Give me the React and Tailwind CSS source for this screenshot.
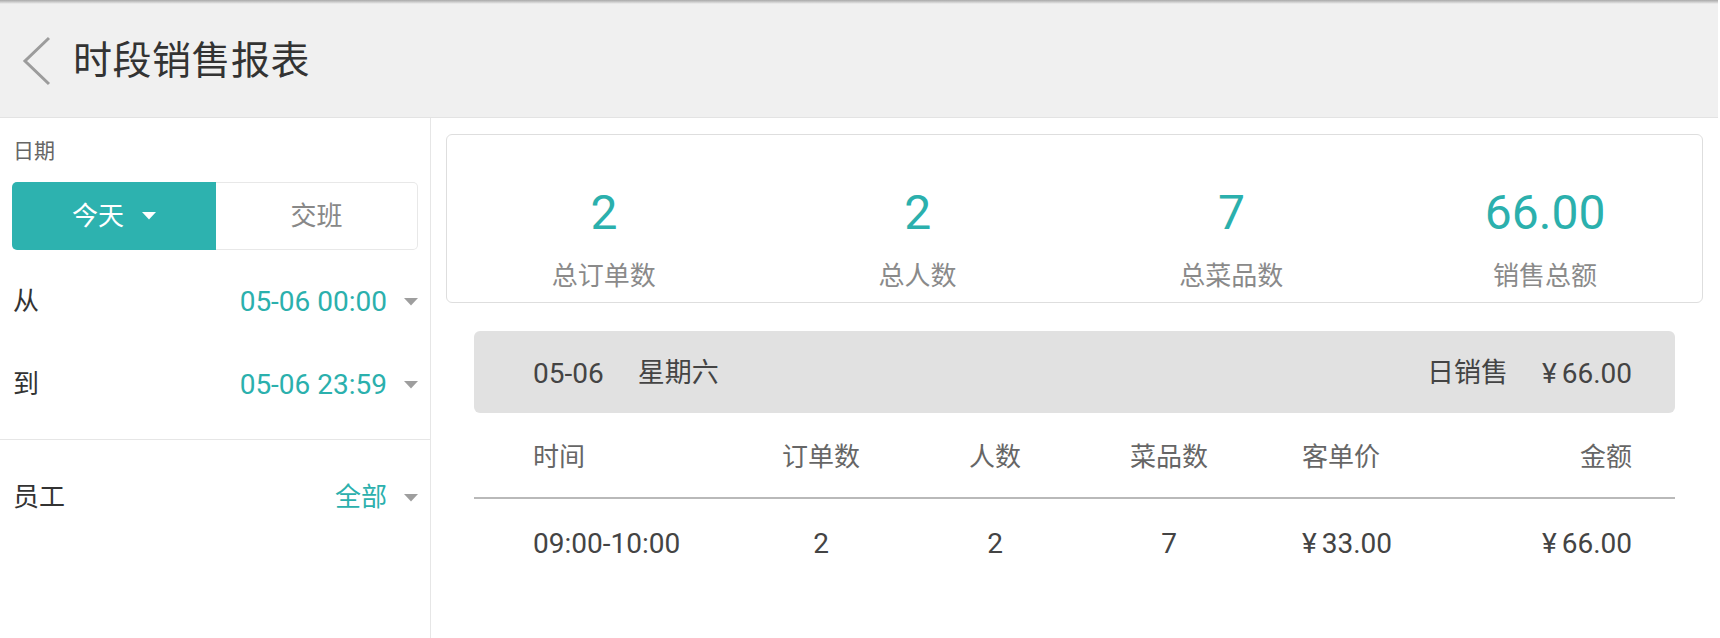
import React from 'react'

const teal = 'text-[#2bb0ad]'

function Caret({ className = 'fill-[#9e9e9e]' }) {
  return (
    <svg width="14" height="8" viewBox="0 0 14 8" className={className}>
      <path d="M0 0h14L7 7.5z" />
    </svg>
  )
}

function FilterRow({ label, value, size = 'text-[28px]' }) {
  return (
    <div className="h-[83px] flex items-center justify-between">
      <span className="pl-[1px] text-[26px] text-[#333]">{label}</span>
      <div className="flex items-center">
        <span className={`${size} ${teal}`}>{value}</span>
        <Caret className="ml-[17px] fill-[#9e9e9e]" />
      </div>
    </div>
  )
}

function Stat({ value, label }) {
  return (
    <div className="flex flex-col items-center pt-[50px]">
      <div className={`text-[48px] leading-[56px] ${teal}`}>{value}</div>
      <div className="mt-[18px] text-[26px] leading-[34px] text-[#8a8a8a]">{label}</div>
    </div>
  )
}

function Yen({ amount }) {
  return (
    <span>
      <span className="mr-[5px]">¥</span>
      {amount}
    </span>
  )
}

const cols = 'grid grid-cols-[200px_176px_172px_176px_229px_1fr] items-center'

export default function App() {
  return (
    <div className="w-[1718px] h-[638px] bg-white font-['Roboto','Noto_Sans_CJK_SC',sans-serif] overflow-hidden">
      <header className="h-[118px] bg-[#f0f0f0] border-b border-[#e3e3e3] flex flex-col">
        <div className="h-[4px] bg-linear-to-b from-[#a9a9a9] to-[#f0f0f0]" />
        <div className="flex-1 flex items-center pl-[22px]">
          <svg width="30" height="50" viewBox="0 0 30 50" fill="none" stroke="#9c9c9c" strokeWidth="3">
            <path d="M27 2 L3 25 L27 48" />
          </svg>
          <h1 className="ml-[21px] pt-[2px] text-[39px] text-[#333] tracking-[0.5px]">时段销售报表</h1>
        </div>
      </header>

      <div className="flex h-[520px]">
        <aside className="w-[431px] border-r border-[#e6e6e6]">
          <div className="px-[12px] pt-[19px]">
            <div className="pl-[1px] text-[21px] leading-[28px] text-[#666]">日期</div>
            <div className="mt-[17px] h-[68px] flex">
              <div className="w-[204px] rounded-l-[5px] bg-[#2db2af] flex items-center justify-center text-white text-[26px]">
                今天
                <Caret className="ml-[18px] fill-white" />
              </div>
              <div className="flex-1 rounded-r-[5px] border border-l-0 border-[#e8e8e8] flex items-center justify-center text-[#888] text-[26px]">
                交班
              </div>
            </div>
            <div className="mt-[10px]">
              <FilterRow label="从" value="05-06 00:00" />
              <FilterRow label="到" value="05-06 23:59" />
            </div>
          </div>
          <div className="mt-[13px] h-px bg-[#e6e6e6]" />
          <div className="px-[12px] mt-[16px]">
            <FilterRow label="员工" value="全部" size="text-[26px]" />
          </div>
        </aside>

        <main className="flex-1 px-[15px] pt-[16px]">
          <div className="h-[169px] border border-[#dedede] rounded-[6px] grid grid-cols-4">
            <Stat value="2" label="总订单数" />
            <Stat value="2" label="总人数" />
            <Stat value="7" label="总菜品数" />
            <Stat value="66.00" label="销售总额" />
          </div>

          <div className="mx-[28px] mt-[28px]">
            <div className="h-[82px] rounded-[6px] bg-[#e1e1e1] flex items-center justify-between pl-[59px] pr-[43px] pt-[3px] text-[28px] text-[#444]">
              <div className="flex items-center">
                <span>05-06</span>
                <span className="ml-[34px] text-[27px]">星期六</span>
              </div>
              <div className="flex items-center">
                <span className="text-[27px]">日销售</span>
                <span className="ml-[34px]"><Yen amount="66.00" /></span>
              </div>
            </div>

            <div className={`${cols} h-[84px] pl-[59px] pr-[43px] pt-[4px] text-[26px] text-[#666]`}>
              <span>时间</span>
              <span className="text-center">订单数</span>
              <span className="text-center">人数</span>
              <span className="text-center">菜品数</span>
              <span className="pl-[45px]">客单价</span>
              <span className="text-right">金额</span>
            </div>
            <div className="h-[2px] bg-[#b9b9b9]" />
            <div className={`${cols} h-[86px] pl-[59px] pr-[43px] pt-[4px] text-[28px] text-[#444]`}>
              <span>09:00-10:00</span>
              <span className="text-center">2</span>
              <span className="text-center">2</span>
              <span className="text-center">7</span>
              <span className="pl-[45px]"><Yen amount="33.00" /></span>
              <span className="text-right"><Yen amount="66.00" /></span>
            </div>
          </div>
        </main>
      </div>
    </div>
  )
}
